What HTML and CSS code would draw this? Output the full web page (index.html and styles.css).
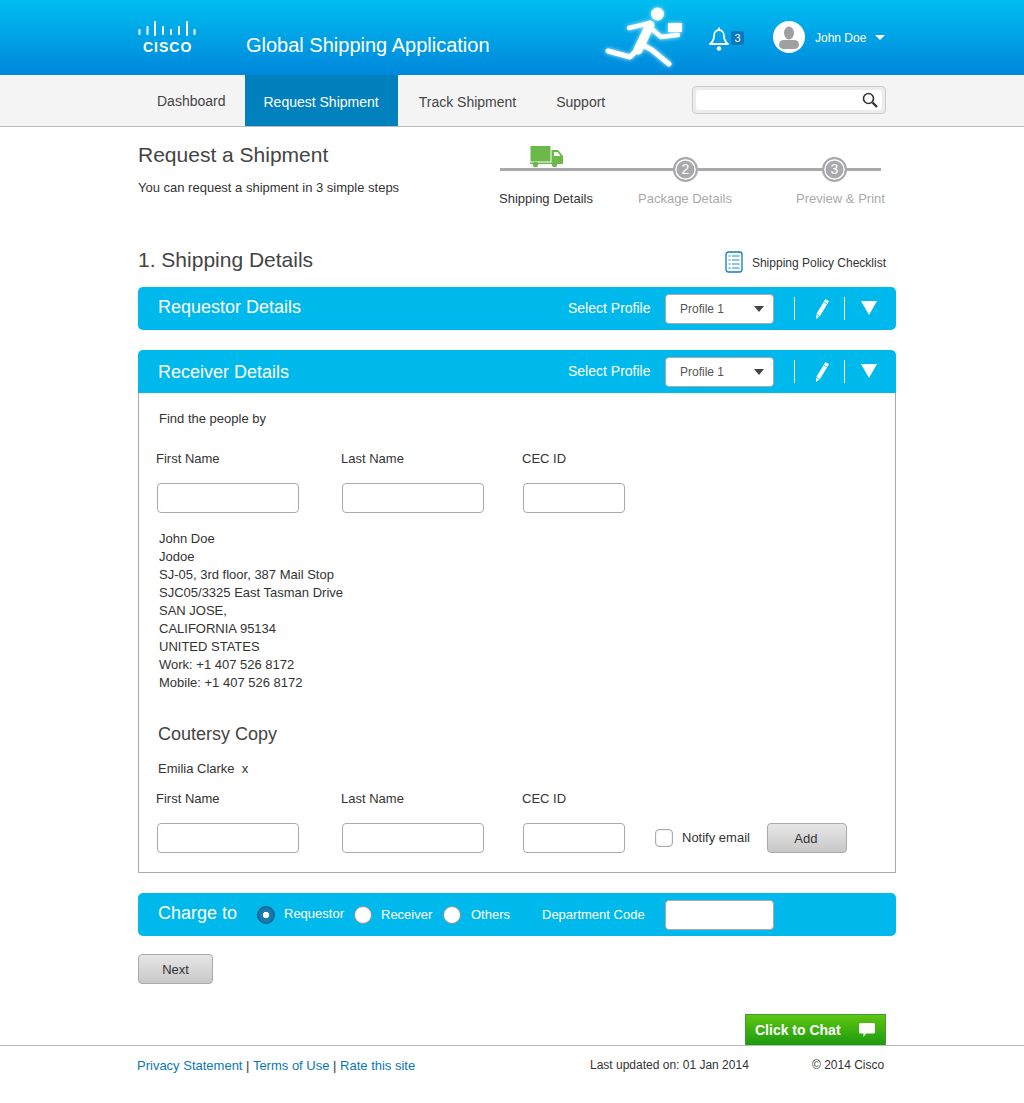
FILE: index.html
```html
<!DOCTYPE html>
<html lang="en">
<head>
    <meta charset="UTF-8">
    <meta name="viewport" content="width=device-width, initial-scale=1.0">
    <title>Global Shipping Application</title>
    <link rel="stylesheet" href="styles.css">
</head>
<body>

<header class="top-bar">
    <div class="logo">
        <svg class="logo-bars" width="60" height="16" viewBox="0 0 60 16">
            <g stroke="#fff" stroke-width="2" stroke-linecap="round">
                <line x1="1.5" y1="9" x2="1.5" y2="13"/>
                <line x1="9.500" y1="6" x2="9.500" y2="13"/>
                <line x1="17" y1="1" x2="17" y2="14"/>
                <line x1="25" y1="6" x2="25" y2="13"/>
                <line x1="33" y1="9" x2="33" y2="13"/>
                <line x1="41" y1="6" x2="41" y2="13"/>
                <line x1="49" y1="1" x2="49" y2="14"/>
                <line x1="56.500" y1="9" x2="56.500" y2="13"/>
            </g>
        </svg>
        <span class="logo-text">CISCO</span>
    </div>
    <div class="app-title">Global Shipping Application</div>

    <svg class="runner" width="90" height="75" viewBox="600 0 90 75">
        <circle cx="656.5" cy="14" r="6.5" fill="#fff"/>
        <g fill="none" stroke="#fff" stroke-linecap="round" stroke-linejoin="round">
            <path d="M649 25 L637 50" stroke-width="9"/>
            <path d="M628 28 L649 23" stroke-width="4.500"/>
            <path d="M651 29 L660 37 L677 35" stroke-width="4.500"/>
            <path d="M640 44 L651 50 L668 64" stroke-width="5"/>
            <path d="M636 50 L629 57 L607 51" stroke-width="5"/>
        </g>
        <rect x="667" y="23" width="14" height="9" fill="#fff"/>
    </svg>

    <div class="notify">
        <svg width="22" height="26" viewBox="0 0 22 26">
            <path d="M11 1.5 V4 M6 10 C6 6 8.500 4 11 4 C13.500 4 16 6 16 10 C16 14 17.500 16 20 18 H2 C4.500 16 6 14 6 10 Z" fill="none" stroke="#fff" stroke-width="1.8" stroke-linejoin="round"/>
            <circle cx="11" cy="22.5" r="2.3" fill="#fff"/>
        </svg>
        <span class="badge">3</span>
    </div>

    <div class="user">
        <svg width="32" height="32" viewBox="0 0 32 32">
            <circle cx="16" cy="16" r="16" fill="#fff"/>
            <ellipse cx="16" cy="12" rx="5" ry="6.5" fill="#a0a0a0"/>
            <rect x="6" y="19" width="20" height="9" rx="4.5" fill="#a0a0a0"/>
        </svg>
        <span class="user-name">John Doe</span>
        <span class="caret caret-white"></span>
    </div>
</header>

<nav class="nav-bar">
    <a class="nav-item nav-first">Dashboard</a>
    <a class="nav-item nav-active">Request Shipment</a>
    <a class="nav-item">Track Shipment</a>
    <a class="nav-item">Support</a>
    <div class="search">
        <div class="search-inner">
            <svg width="18" height="18" viewBox="0 0 18 18">
                <circle cx="7.5" cy="7.5" r="5" fill="none" stroke="#333" stroke-width="1.6"/>
                <path d="M11.5 11.5 L16 16" stroke="#333" stroke-width="2.4"/>
            </svg>
        </div>
    </div>
</nav>

<main class="page">
    <div class="page-top">
        <div class="page-intro">
            <h1 class="heading">Request a Shipment</h1>
            <p class="intro-text">You can request a shipment in 3 simple steps</p>
        </div>
        <div class="stepper">
            <div class="step-line"></div>
            <svg class="truck" width="34" height="22" viewBox="0 0 34 22">
                <rect x="0.5" y="0" width="20" height="15.5" fill="#6cb84a"/>
                <path d="M21.5 4 H28 L33 10 V17 H21.5 Z" fill="#6cb84a"/>
                <path d="M24 6 H27.5 L30.5 10 H24 Z" fill="#fff"/>
                <rect x="0" y="16.5" width="33" height="1.5" fill="#6cb84a"/>
                <circle cx="5.5" cy="18.5" r="2.7" fill="#6cb84a"/>
                <circle cx="24.5" cy="18.5" r="2.7" fill="#6cb84a"/>
            </svg>
            <span class="step-num step-num-2">2</span>
            <span class="step-num step-num-3">3</span>
            <div class="step-labels">
                <span class="step-label step-label-on">Shipping Details</span>
                <span class="step-label step-label-mid">Package Details</span>
                <span class="step-label">Preview &amp; Print</span>
            </div>
        </div>
    </div>

    <div class="section-row">
        <h2 class="heading">1. Shipping Details</h2>
        <div class="checklist">
            <svg width="18" height="22" viewBox="0 0 18 22">
                <rect x="1" y="1" width="16" height="20" rx="2.5" fill="#fff" stroke="#0f7fb8" stroke-width="1.3"/>
                <g stroke="#3aa3d8" stroke-width="1.2">
                    <line x1="3.5" y1="5" x2="5.5" y2="5"/>
                    <line x1="7" y1="5" x2="14.5" y2="5"/>
                    <line x1="3.5" y1="9" x2="5.5" y2="9"/>
                    <line x1="7" y1="9" x2="14.5" y2="9"/>
                    <line x1="3.5" y1="13" x2="5.5" y2="13"/>
                    <line x1="7" y1="13" x2="14.5" y2="13"/>
                    <line x1="3.5" y1="17" x2="5.5" y2="17"/>
                    <line x1="7" y1="17" x2="14.5" y2="17"/>
                </g>
            </svg>
            <span>Shipping Policy Checklist</span>
        </div>
    </div>

    <section class="panel panel-closed">
        <div class="panel-head panel-head-closed">
            <span class="panel-title panel-title-up">Requestor Details</span>
            <span class="select-label">Select Profile</span>
            <div class="select"><span>Profile 1</span><span class="caret caret-dark"></span></div>
            <span class="divider"></span>
            <svg class="pencil" width="16" height="22" viewBox="0 0 16 22">
                <path d="M11.500 1 L15 3.200 L6 18 L2 21 L2.300 16 Z" fill="#fff"/>
                <path d="M9.800 4 L13.400 6.200 M2 16.200 L5.800 18.400" stroke="#00b9ec" stroke-width="0.8"/>
            </svg>
            <span class="divider"></span>
            <span class="toggle"></span>
        </div>
    </section>

    <section class="panel">
        <div class="panel-head">
            <span class="panel-title panel-title-down">Receiver Details</span>
            <span class="select-label">Select Profile</span>
            <div class="select"><span>Profile 1</span><span class="caret caret-dark"></span></div>
            <span class="divider"></span>
            <svg class="pencil" width="16" height="22" viewBox="0 0 16 22">
                <path d="M11.500 1 L15 3.200 L6 18 L2 21 L2.300 16 Z" fill="#fff"/>
                <path d="M9.800 4 L13.400 6.200 M2 16.200 L5.800 18.400" stroke="#00b9ec" stroke-width="0.8"/>
            </svg>
            <span class="divider"></span>
            <span class="toggle"></span>
        </div>
        <div class="panel-body">
            <p class="find-text">Find the people by</p>
            <div class="field-row find-fields">
                <div class="field field-name"><label>First Name</label><input type="text"></div>
                <div class="field field-last"><label>Last Name</label><input type="text"></div>
                <div class="field field-cec"><label>CEC ID</label><input type="text"></div>
            </div>
            <div class="address">
                John Doe<br>
                Jodoe<br>
                SJ-05, 3rd floor, 387 Mail Stop<br>
                SJC05/3325 East Tasman Drive<br>
                SAN JOSE,<br>
                CALIFORNIA 95134<br>
                UNITED STATES<br>
                Work: +1 407 526 8172<br>
                Mobile: +1 407 526 8172
            </div>
            <h3 class="copy-title">Coutersy Copy</h3>
            <p class="copy-person">Emilia Clarke&nbsp; x</p>
            <div class="field-row copy-fields">
                <div class="field field-name"><label>First Name</label><input type="text"></div>
                <div class="field field-last"><label>Last Name</label><input type="text"></div>
                <div class="field field-cec"><label>CEC ID</label><input type="text"></div>
                <span class="check"></span>
                <span class="check-label">Notify email</span>
                <button type="button" class="btn btn-add">Add</button>
            </div>
        </div>
    </section>

    <section class="charge">
        <span class="panel-title charge-title">Charge to</span>
        <span class="radio radio-on"></span><span class="radio-label radio-requestor">Requestor</span>
        <span class="radio"></span><span class="radio-label radio-receiver">Receiver</span>
        <span class="radio"></span><span class="radio-label radio-others">Others</span>
        <span class="dept-label">Department Code</span>
        <input class="dept-input" type="text">
    </section>

    <button type="button" class="btn btn-next">Next</button>

    <div class="chat-row">
        <div class="chat">
            <span>Click to Chat</span>
            <svg width="18" height="17" viewBox="0 0 18 17">
                <path d="M2.5 1 H15.5 A1.5 1.5 0 0 1 17 2.5 V10 A1.5 1.5 0 0 1 15.5 11.500 H8 L5.500 15 V11.500 H2.500 A1.500 1.500 0 0 1 1 10 V2.500 A1.500 1.500 0 0 1 2.500 1 Z" fill="#fff"/>
            </svg>
        </div>
    </div>
</main>

<footer class="footer">
    <div class="footer-links"><a>Privacy Statement</a> | <a>Terms of Use</a> | <a>Rate this site</a></div>
    <span class="footer-date">Last updated on: 01 Jan 2014</span>
    <span class="footer-copy">© 2014 Cisco</span>
</footer>

</body>
</html>
```

FILE: styles.css
```css
* {
    box-sizing: border-box;
}

body {
    margin: 0;
    font-family: "Liberation Sans", Arial, sans-serif;
    font-size: 13px;
    color: #333;
    background: #fff;
}

h1, h2, h3, p {
    margin: 0;
    font-weight: normal;
}

/* header */
.top-bar {
    display: flex;
    align-items: center;
    height: 75px;
    padding-left: 138px;
    background: linear-gradient(#00bdef, #0087dc);
    color: #fff;
}

.logo {
    width: 60px;
    height: 32px;
    margin-top: -2px;
}

.logo-bars {
    display: block;
}

.logo-text {
    display: block;
    margin: 3px 0 0 5px;
    font-size: 14px;
    font-weight: bold;
    line-height: 14px;
    letter-spacing: 1px;
}

.app-title {
    width: 355px;
    margin-left: 48px;
    margin-top: 15px;
    font-size: 20px;
}

.runner {
    flex: none;
    filter: drop-shadow(0 0 2px #b8f2ff);
}

.notify {
    display: flex;
    align-items: flex-start;
    width: 65px;
    margin-left: 17px;
    margin-top: 2px;
}

.badge {
    width: 13px;
    height: 14px;
    margin: 5px 0 0 1px;
    border-radius: 2px;
    background: #0878bd;
    font-size: 11px;
    line-height: 14px;
    text-align: center;
}

.user {
    display: flex;
    align-items: center;
    margin-top: -1px;
}

.user-name {
    margin: 2px 0 0 10px;
    font-size: 12px;
}

.caret {
    width: 0;
    height: 0;
    border-left: 5px solid transparent;
    border-right: 5px solid transparent;
}

.caret-white {
    margin-left: 9px;
    border-top: 5px solid #fff;
}

.caret-dark {
    margin-left: auto;
    margin-right: 9px;
    border-left-width: 5.5px;
    border-right-width: 5.5px;
    border-top: 6px solid #444;
}

/* nav */
.nav-bar {
    display: flex;
    align-items: center;
    height: 52px;
    padding: 0 138px;
    background: #f4f4f4;
    border-bottom: 1px solid #bbb;
}

.nav-item {
    display: block;
    height: 51px;
    padding: 0 20px;
    font-size: 14px;
    line-height: 55px;
    color: #444;
}

.nav-first {
    padding: 0 19px;
    line-height: 53px;
}

.nav-active {
    padding: 0 19px;
    margin-right: 1px;
    background: #0080bc;
    color: #fff;
}

.search {
    margin-left: auto;
    margin-top: -2px;
    width: 194px;
    height: 28px;
    padding: 3px;
    background: #ececec;
    border: 1px solid #ccc;
    border-radius: 4px;
}

.search-inner {
    display: flex;
    justify-content: flex-end;
    height: 20px;
    padding: 1px 3px 0 0;
    background: #fff;
    border-radius: 3px;
}

/* page */
.page {
    width: 896px;
    padding-left: 138px;
}

.page-top {
    display: flex;
    height: 118px;
}

.page-intro {
    width: 361px;
}

.heading {
    font-size: 21px;
    line-height: 24px;
    color: #444;
}

.page-intro .heading {
    margin-top: 16px;
}

.intro-text {
    margin-top: 13px;
    line-height: 16px;
}

.stepper {
    position: relative;
    width: 397px;
}

.step-line {
    position: absolute;
    left: 1px;
    top: 41px;
    width: 381px;
    height: 3px;
    background: #a9a9ad;
}

.truck {
    position: absolute;
    left: 31px;
    top: 19px;
}

.step-num {
    position: absolute;
    top: 30px;
    width: 25px;
    height: 25px;
    border-radius: 50%;
    background: #a9a9ad;
    border: 2px solid #a9a9ad;
    box-shadow: inset 0 0 0 1.5px #fff;
    color: #fff;
    font-size: 14px;
    line-height: 21px;
    text-align: center;
}

.step-num-2 {
    left: 174px;
}

.step-num-3 {
    left: 323px;
}

.step-labels {
    position: absolute;
    left: 0;
    top: 64px;
    display: flex;
}

.step-label {
    line-height: 16px;
    color: #aaa;
}

.step-label-on {
    width: 139px;
    color: #333;
}

.step-label-mid {
    width: 158px;
}

.section-row {
    display: flex;
    align-items: center;
    justify-content: space-between;
    height: 30px;
    width: 748px;
    margin-bottom: 12px;
}

.checklist {
    display: flex;
    align-items: center;
    gap: 9px;
    font-size: 12px;
}

.checklist svg {
    margin-top: 3px;
}

.checklist span {
    margin-top: 5px;
}

/* panels */
.panel {
    width: 758px;
}

.panel-closed {
    margin-bottom: 20px;
}

.panel-head {
    display: flex;
    align-items: center;
    height: 43px;
    padding-left: 20px;
    background: #00b9ec;
    border-radius: 5px 5px 0 0;
    color: #fff;
}

.panel-head-closed {
    border-radius: 5px;
}

.panel-title {
    font-size: 18px;
    color: #fff;
}

.panel-head .panel-title {
    width: 410px;
}

.panel-title-up {
    margin-top: -3px;
}

.panel-title-down {
    margin-top: 2px;
}

.select-label {
    width: 97px;
    font-size: 14px;
    margin-top: -1px;
}

.select {
    display: flex;
    align-items: center;
    width: 109px;
    height: 30px;
    margin-top: 1px;
    padding-left: 14px;
    background: #fff;
    border: 1px solid #aaa;
    border-radius: 4px;
    color: #555;
    font-size: 12px;
}

.divider {
    width: 1px;
    height: 23px;
    background: #fff;
    margin-left: 20px;
}

.pencil {
    margin-left: 19px;
    margin-right: -6px;
}

.toggle {
    width: 0;
    height: 0;
    margin-left: 16px;
    margin-top: -2px;
    border-left: 8px solid transparent;
    border-right: 8px solid transparent;
    border-top: 14px solid #fff;
}

.panel-body {
    height: 480px;
    padding: 18px 0 0 18px;
    border: 1px solid #aaa;
    border-top: none;
}

.find-text {
    margin-left: 2px;
    line-height: 16px;
}

.field-row {
    display: flex;
    align-items: flex-end;
}

.find-fields {
    margin-top: 24px;
}

.field label {
    display: block;
    height: 16px;
    margin: 0 0 16px -1px;
    line-height: 16px;
}

.field input {
    display: block;
    width: 142px;
    height: 30px;
    border: 1px solid #aaa;
    border-radius: 4px;
    background: #fff;
}

.field-name {
    width: 185px;
}

.field-last {
    width: 181px;
}

.field-cec {
    width: 102px;
}

.field-cec input {
    width: 102px;
}

.address {
    margin: 17px 0 0 2px;
    line-height: 18px;
}

.copy-title {
    margin: 31px 0 0 1px;
    font-size: 18px;
    line-height: 22px;
    color: #444;
}

.copy-person {
    margin: 16px 0 0 1px;
    line-height: 16px;
}

.copy-fields {
    margin-top: 14px;
}

.check {
    width: 18px;
    height: 18px;
    margin: 0 0 6px 30px;
    border: 1px solid #aaa;
    border-radius: 4px;
    background: #fff;
    box-shadow: inset 0 0 2px #ccc;
}

.check-label {
    margin: 0 17px 7px 9px;
    line-height: 16px;
}

.btn {
    display: block;
    height: 30px;
    padding: 0;
    border: 1px solid #aaa;
    border-radius: 4px;
    background: linear-gradient(#e6e6e6, #c8c8c8);
    color: #333;
    font-family: inherit;
    font-size: 13px;
}

.btn-add {
    width: 80px;
    padding-right: 2px;
}

.charge {
    display: flex;
    align-items: center;
    width: 758px;
    height: 43px;
    margin-top: 20px;
    padding-left: 20px;
    background: #00b9ec;
    border-radius: 5px;
    color: #fff;
}

.charge-title {
    width: 99px;
    margin-top: -3px;
}

.radio {
    flex: none;
    width: 18px;
    height: 18px;
    margin-right: 9px;
    border-radius: 50%;
    border: 1px solid #999;
    background: radial-gradient(#fff 55%, #ddd);
}

.radio-on {
    border-color: #0d5c86;
    background: radial-gradient(#fff 0 3px, #1b7fb4 3.5px, #0f6a9c);
}

.radio-label {
    margin-top: -1px;
}

.radio-requestor {
    width: 70px;
    margin-top: -3px;
}

.radio-receiver {
    width: 62px;
}

.radio-others {
    width: 71px;
    margin-left: 1px;
}

.dept-label {
    width: 123px;
    margin-top: -1px;
}

.dept-input {
    width: 109px;
    height: 30px;
    border: 1px solid #aaa;
    border-radius: 4px;
    background: #fff;
}

.btn-next {
    width: 75px;
    margin-top: 18px;
}

.chat-row {
    display: flex;
    justify-content: flex-end;
    width: 748px;
    margin-top: 30px;
}

.chat {
    display: flex;
    align-items: center;
    justify-content: space-between;
    width: 141px;
    height: 31px;
    padding: 0 9px;
    background: linear-gradient(#5dc60f, #1c9a10);
    border: 1px solid #3f9a38;
    border-bottom: none;
    color: #fff;
    font-size: 14px;
    font-weight: bold;
}

/* footer */
.footer {
    display: flex;
    align-items: center;
    height: 41px;
    padding: 0 138px 2px 137px;
    border-top: 1px solid #bbb;
}

.footer-links {
    width: 453px;
    font-size: 13px;
}

.footer-links a {
    color: #0a78b8;
}

.footer-date {
    width: 222px;
    font-size: 12px;
}

.footer-copy {
    font-size: 12px;
}
```
